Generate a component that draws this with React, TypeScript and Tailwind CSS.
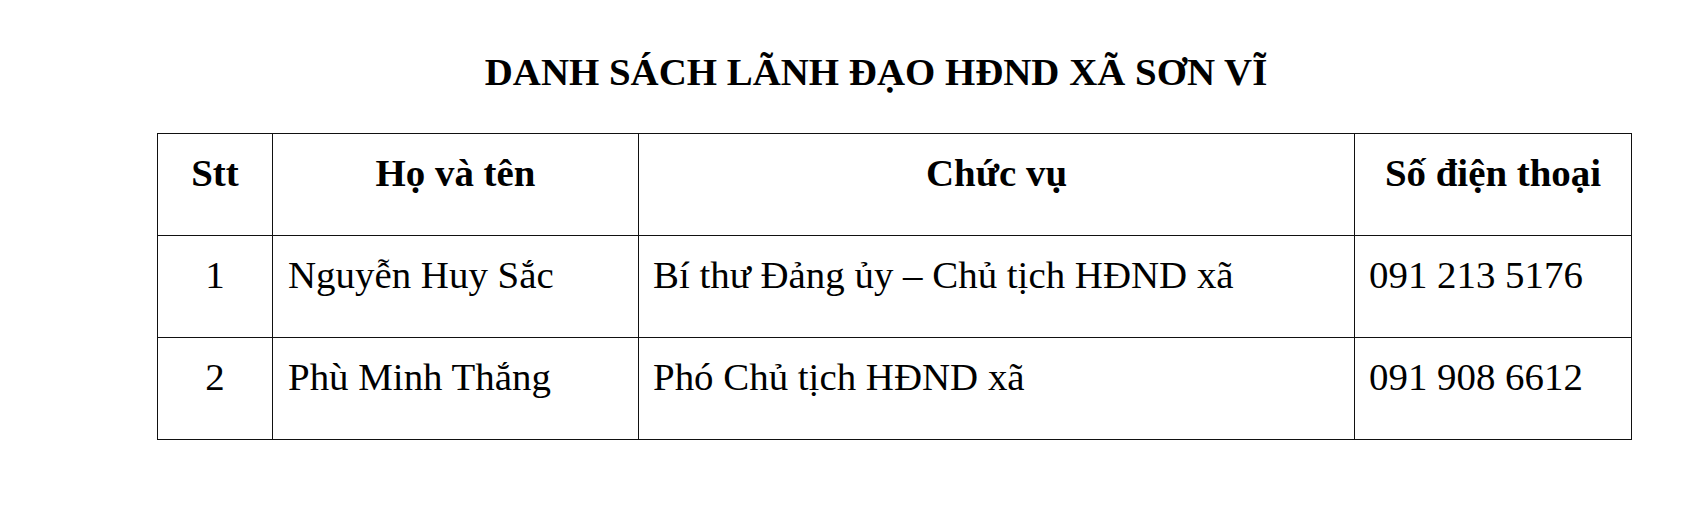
const rows = [
  { stt: "1", name: "Nguyễn Huy Sắc", role: "Bí thư Đảng ủy – Chủ tịch HĐND xã", phone: "091 213 5176" },
  { stt: "2", name: "Phù Minh Thắng", role: "Phó Chủ tịch HĐND xã", phone: "091 908 6612" },
]

const serif = "font-['Liberation_Serif','Times_New_Roman',serif]"

export default function App() {
  return (
    <div className={`w-[1684px] h-[507px] bg-white text-black ${serif}`}>
      {/* Title */}
      <h1 className="pt-[50px] pl-[68px] text-center text-[38.9px] leading-[44px] font-bold">
        DANH SÁCH LÃNH ĐẠO HĐND XÃ SƠN VĨ
      </h1>

      {/* Table */}
      <table className="ml-[157px] mt-[39px] w-[1474px] table-fixed border-collapse text-[38.9px] leading-[44px]">
        <colgroup>
          <col className="w-[115px]" />
          <col className="w-[366px]" />
          <col className="w-[716px]" />
          <col className="w-[277px]" />
        </colgroup>
        <thead>
          <tr className="h-[102px]">
            {["Stt", "Họ và tên", "Chức vụ", "Số điện thoại"].map((h) => (
              <th key={h} className="border border-[#111] align-top pt-[17px] px-0 text-center font-bold">
                {h}
              </th>
            ))}
          </tr>
        </thead>
        <tbody>
          {rows.map((r) => (
            <tr key={r.stt} className="h-[102px]">
              <td className="border border-[#111] align-top pt-[17px] text-center">{r.stt}</td>
              <td className="border border-[#111] align-top pt-[17px] pl-[15px]">{r.name}</td>
              <td className="border border-[#111] align-top pt-[17px] pl-[14px]">{r.role}</td>
              <td className="border border-[#111] align-top pt-[17px] pl-[14px]">{r.phone}</td>
            </tr>
          ))}
        </tbody>
      </table>
    </div>
  )
}
